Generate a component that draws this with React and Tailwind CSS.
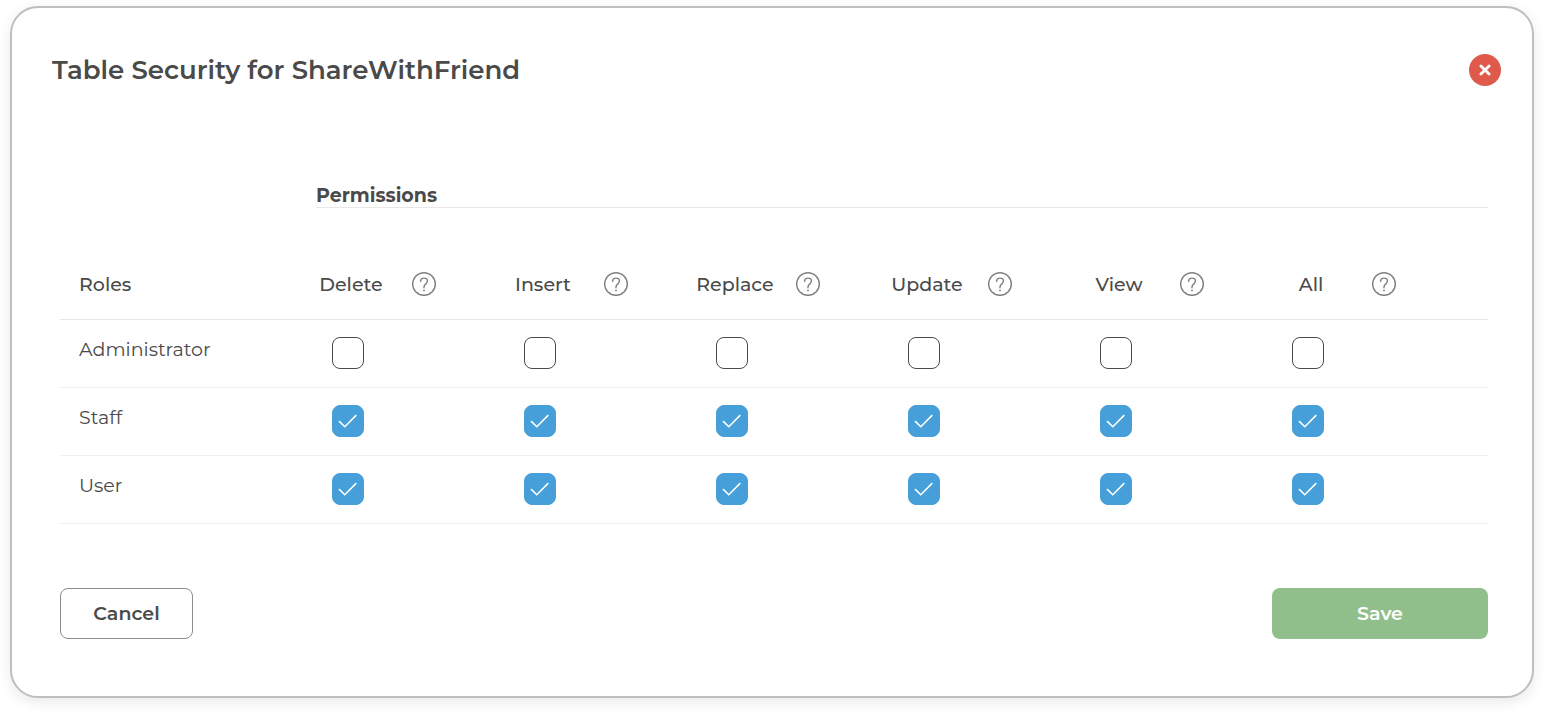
import { useState } from "react";

const PERMISSIONS = ["Delete", "Insert", "Replace", "Update", "View", "All"];
const ROLES = [
  { name: "Administrator", granted: false },
  { name: "Staff", granted: true },
  { name: "User", granted: true },
];

function HelpIcon() {
  return (
    <svg viewBox="0 0 24 24" className="size-6" fill="none" stroke="#7e7e7e" aria-hidden="true">
      <circle cx="12" cy="12" r="11.3" strokeWidth="1.4" />
      <path
        d="M8.6 9.2C8.7 7.3 10.1 6.1 12 6.1c2 0 3.4 1.2 3.4 3 0 1.4-.8 2.2-1.8 3-1.1.8-1.6 1.5-1.6 2.9v.8"
        strokeWidth="1.4"
        strokeLinecap="round"
      />
      <circle cx="12" cy="18.5" r="0.9" fill="#7e7e7e" stroke="none" />
    </svg>
  );
}

function PermissionBox({ label, initial }) {
  const [checked, setChecked] = useState(initial);
  return (
    <label className="grid size-8 cursor-pointer">
      <input
        type="checkbox"
        aria-label={label}
        checked={checked}
        onChange={(e) => setChecked(e.target.checked)}
        className="peer col-start-1 row-start-1 size-8 appearance-none rounded-lg border border-[#4a4a4a] bg-white checked:border-[#479fd9] checked:bg-[#479fd9]"
      />
      <svg
        viewBox="0 0 32 32"
        className="pointer-events-none invisible col-start-1 row-start-1 size-8 peer-checked:visible"
        fill="none"
        stroke="white"
        strokeWidth="1.5"
        aria-hidden="true"
      >
        <path d="M7 16.1 12.8 21.7 24.3 10.1" />
      </svg>
    </label>
  );
}

export default function App() {
  return (
    <main className="px-[10px] pt-[6px] pb-[14px] font-['Montserrat','Inter',sans-serif] text-[19px]/[26px] text-[#4a4a4a]">
      <section
        aria-labelledby="dialog-title"
        className="rounded-[28px] border-2 border-[#bfbfbf] bg-white pt-[46px] pb-[57px] shadow-[0_4px_14px_rgba(0,0,0,0.09)]"
      >
        <header className="flex items-center justify-between pr-[31px] pl-10">
          <h1 id="dialog-title" className="text-[26px]/8 font-semibold">
            Table Security for ShareWithFriend
          </h1>
          <button type="button" aria-label="Close" className="grid size-8 place-items-center rounded-full bg-[#e05a4b]">
            <svg viewBox="0 0 12 12" className="size-3" stroke="white" strokeWidth="2.8" strokeLinecap="round" aria-hidden="true">
              <path d="M1.9 1.9 10.1 10.1M10.1 1.9 1.9 10.1" />
            </svg>
          </button>
        </header>

        <div className="mt-[99px] pr-11 pl-12">
          <table className="w-full table-fixed border-separate border-spacing-0 text-left">
            <colgroup>
              <col className="w-[252px]" />
              <col className="w-[192px]" />
              <col className="w-[192px]" />
              <col className="w-[192px]" />
              <col className="w-[192px]" />
              <col className="w-[192px]" />
              <col />
            </colgroup>
            <thead>
              <tr>
                <td className="p-0" />
                <th scope="colgroup" colSpan={6} className="p-0 pl-1 font-bold">
                  <div className="border-b border-[#e8e8e8] leading-[22px]">Permissions</div>
                </th>
              </tr>
              <tr>
                <th scope="col" className="border-b border-[#e8e8e8] pt-16 pr-0 pb-[21px] pl-[19px] font-medium">
                  Roles
                </th>
                {PERMISSIONS.map((name) => (
                  <th key={name} scope="col" className="border-b border-[#e8e8e8] px-0 pt-16 pb-[21px] font-medium">
                    <div className="flex items-start gap-[22px]">
                      <span className="w-[78px] text-center">{name}</span>
                      <button type="button" aria-label={`About ${name}`} className="size-6 rounded-full">
                        <HelpIcon />
                      </button>
                    </div>
                  </th>
                ))}
              </tr>
            </thead>
            <tbody>
              {ROLES.map((role) => (
                <tr key={role.name}>
                  <th scope="row" className="border-b border-[#efefef] pt-[17px] pr-0 pb-[18px] pl-[19px] align-top font-normal">
                    {role.name}
                  </th>
                  {PERMISSIONS.map((name) => (
                    <td key={name} className="border-b border-[#efefef] pt-[17px] pr-0 pb-[18px] pl-5">
                      <PermissionBox label={`${role.name}: ${name}`} initial={role.granted} />
                    </td>
                  ))}
                </tr>
              ))}
            </tbody>
          </table>

          <footer className="mt-16 flex items-center justify-between font-semibold">
            <button type="button" className="h-[51px] w-[133px] rounded-lg border border-[#8c8c8c] bg-white">
              Cancel
            </button>
            <button type="button" className="h-[51px] w-[216px] rounded-lg bg-[#91bf8b] text-white">
              Save
            </button>
          </footer>
        </div>
      </section>
    </main>
  );
}
